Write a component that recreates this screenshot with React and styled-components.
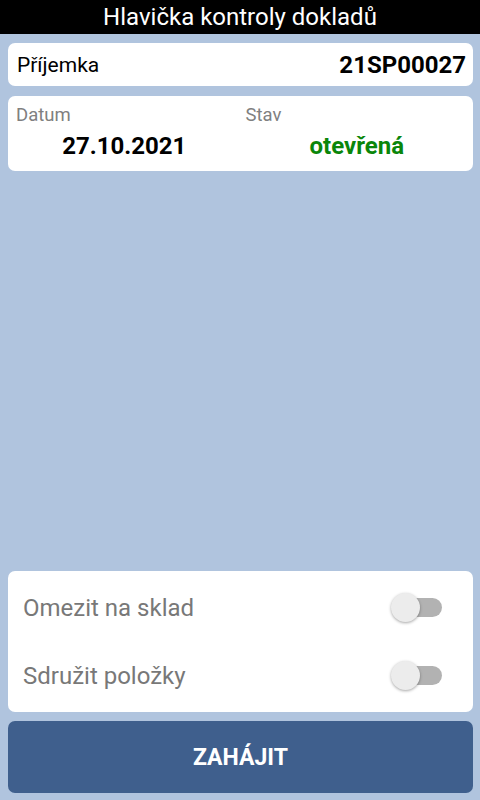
import styled, { createGlobalStyle } from 'styled-components';

const Global = createGlobalStyle`
  html, body { margin: 0; padding: 0; }
  body { font-family: Roboto, "Noto Sans", sans-serif; background: #b0c4de; }
`;

const Screen = styled.div`
  width: 480px;
  height: 800px;
  display: flex;
  flex-direction: column;
  background: #b0c4de;
  overflow: hidden;
`;

const TitleBar = styled.div`
  height: 34px;
  background: #000;
  color: #fff;
  font-size: 24px;
  line-height: 34px;
  text-align: center;
`;

const Body = styled.div`
  flex: 1;
  display: flex;
  flex-direction: column;
  padding: 9px 7px 7px 8px;
`;

const Card = styled.div`
  background: #fff;
  border-radius: 7px;
  margin-bottom: ${p => p.gap || 0}px;
`;

const DocRow = styled(Card)`
  height: 43px;
  display: flex;
  align-items: center;
  justify-content: space-between;
  padding: 0 7px 0 9px;
  font-size: 21px;
  color: #000;
`;

const DocNumber = styled.span`
  font-weight: bold;
  font-size: 24px;
`;

const InfoGrid = styled(Card)`
  height: 75px;
  display: grid;
  grid-template-columns: 1fr 1fr;
`;

const Cell = styled.div`
  display: flex;
  flex-direction: column;
  padding: 8px 0 0 ${p => p.indent || 8}px;
`;

const Label = styled.div`
  font-size: 18.5px;
  color: #808080;
  line-height: 22px;
`;

const Value = styled.div`
  font-size: 24px;
  font-weight: bold;
  text-align: center;
  color: ${p => p.color || '#000'};
  margin-top: 6px;
  padding-right: ${p => p.shift || 8}px;
`;

const Spacer = styled.div`
  flex: 1;
`;

const Options = styled(Card)`
  height: 141px;
  display: flex;
  flex-direction: column;
  justify-content: center;
  gap: 26px;
  padding: 0 31px 0 15px;
`;

const OptionRow = styled.div`
  display: flex;
  align-items: center;
  justify-content: space-between;
  height: 42px;
  font-size: 24px;
  color: #787878;
`;

const Track = styled.div`
  position: relative;
  width: 50px;
  height: 19px;
  border-radius: 10px;
  background: #b2b2b2;
`;

const Thumb = styled.div`
  position: absolute;
  left: -1px;
  top: -5px;
  width: 29px;
  height: 29px;
  border-radius: 50%;
  background: #ececec;
  box-shadow: 0 1px 3px rgba(0, 0, 0, 0.35);
`;

const StartButton = styled.button`
  height: 72px;
  margin-top: 9px;
  border: none;
  border-radius: 7px;
  background: #3f5f8d;
  color: #fff;
  font-family: Roboto, sans-serif;
  font-size: 23px;
  font-weight: bold;
`;

const Switch = () => (
  <Track>
    <Thumb />
  </Track>
);

export default function App() {
  return (
    <Screen>
      <Global />
      <TitleBar>Hlavička kontroly dokladů</TitleBar>
      <Body>
        <DocRow gap={10}>
          <span>Příjemka</span>
          <DocNumber>21SP00027</DocNumber>
        </DocRow>
        <InfoGrid>
          <Cell>
            <Label>Datum</Label>
            <Value>27.10.2021</Value>
          </Cell>
          <Cell indent={5}>
            <Label>Stav</Label>
            <Value color="#0a860a" shift={5}>otevřená</Value>
          </Cell>
        </InfoGrid>
        <Spacer />
        <Options>
          <OptionRow>
            <span>Omezit na sklad</span>
            <Switch />
          </OptionRow>
          <OptionRow>
            <span>Sdružit položky</span>
            <Switch />
          </OptionRow>
        </Options>
        <StartButton>ZAHÁJIT</StartButton>
      </Body>
    </Screen>
  );
}
